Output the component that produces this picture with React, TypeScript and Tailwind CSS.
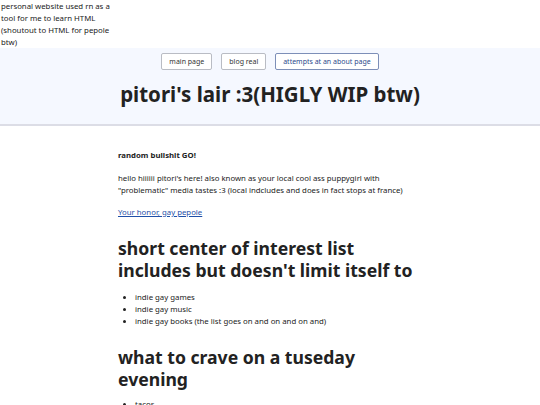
export default function App() {
  return (
    <div className="min-h-[405px] bg-white text-[#222] [font-family:'Noto_Sans',sans-serif]">
      <aside className="w-[140px] whitespace-nowrap px-[1px] text-[7.8px] leading-[12px]">
        personal website used rn as a
        <br />
        tool for me to learn HTML
        <br />
        (shoutout to HTML for pepole
        <br />
        btw)
      </aside>

      <header className="border-b-2 border-[#dcdde6] bg-[#f5f8ff] pb-[16px] pt-[5px]">
        <nav className="flex justify-center gap-[9px]">
          <a className="rounded-[2px] border border-[#b9bcc4] bg-white px-[7px] py-[3px] text-[7px] leading-[9px] text-[#333]">
            main page
          </a>
          <a className="rounded-[2px] border border-[#b9bcc4] bg-white px-[7px] py-[3px] text-[7px] leading-[9px] text-[#333]">
            blog real
          </a>
          <a className="rounded-[2px] border border-[#7d8fb8] bg-white px-[7px] py-[3px] text-[7px] leading-[9px] text-[#2b4a8c]">
            attempts at an about page
          </a>
        </nav>
        <h1 className="mt-[10px] text-center text-[20.5px] font-bold leading-[28px]">
          pitori's lair :3(HIGLY WIP btw)
        </h1>
      </header>

      <main className="mx-auto w-[304px] pt-[23px] text-[7.8px] leading-[12px]">
        <p className="font-bold">random bullshit GO!</p>
        <p className="mt-[11px]">
          hello hiiiiii pitori's here! also known as your local cool ass puppygirl with "problematic" media tastes :3 (local indcludes and does in fact stops at france)
        </p>
        <p className="mt-[10px]">
          <a className="text-[#1f4fa8] underline">Your honor, gay pepole</a>
        </p>

        <h2 className="mt-[19px] text-[17.6px] font-bold leading-[22px]">
          short center of interest list includes but doesn't limit itself to
        </h2>
        <ul className="mt-[10px] list-disc pl-[17px]">
          <li>indie gay games</li>
          <li>indie gay music</li>
          <li>indie gay books (the list goes on and on and on and)</li>
        </ul>

        <h2 className="mt-[19px] text-[17.6px] font-bold leading-[22px]">
          what to crave on a tuseday evening
        </h2>
        <ul className="mt-[8px] list-disc pl-[17px]">
          <li>tacos</li>
        </ul>
      </main>
    </div>
  );
}
